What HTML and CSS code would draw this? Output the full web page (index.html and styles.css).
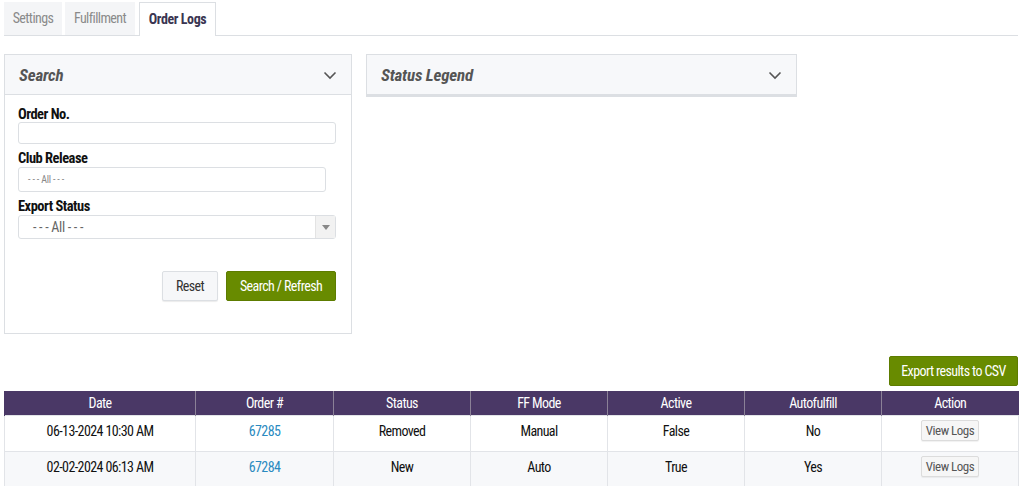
FILE: index.html
```html
<!DOCTYPE html>
<html>
<head>
<meta charset="utf-8">
<link rel="stylesheet" href="styles.css">
</head>
<body>
<div class="page">
  <div class="tabs">
    <div class="tab tab-settings">Settings</div>
    <div class="tab tab-ff">Fulfillment</div>
    <div class="tab tab-active">Order Logs</div>
  </div>

  <div class="panels">
    <div class="panel panel-search">
      <div class="panel-head">
        <span class="panel-title">Search</span>
        <svg class="chev" width="14" height="9" viewBox="0 0 14 9"><path d="M1.5 1.5 L7 7 L12.5 1.5" fill="none" stroke="#555" stroke-width="1.6"/></svg>
      </div>
      <div class="panel-body">
        <label class="lbl">Order No.</label>
        <div class="input input-order"></div>
        <label class="lbl">Club Release</label>
        <div class="input input-club"><span class="ph-small">- - - All - - -</span></div>
        <label class="lbl">Export Status</label>
        <div class="input input-export">
          <span class="ph">- - - All - - -</span>
          <span class="sel-arrow"><svg width="8" height="5" viewBox="0 0 8 5"><path d="M0 0 L8 0 L4 5 Z" fill="#888"/></svg></span>
        </div>
        <div class="btns">
          <button class="btn btn-reset">Reset</button>
          <button class="btn btn-green btn-search">Search / Refresh</button>
        </div>
      </div>
    </div>
    <div class="panel panel-legend">
      <div class="panel-head">
        <span class="panel-title">Status Legend</span>
        <svg class="chev" width="14" height="9" viewBox="0 0 14 9"><path d="M1.5 1.5 L7 7 L12.5 1.5" fill="none" stroke="#555" stroke-width="1.6"/></svg>
      </div>
    </div>
  </div>

  <div class="export-row">
    <button class="btn btn-green btn-export">Export results to CSV</button>
  </div>

  <table class="grid">
    <thead>
      <tr>
        <th class="c-date">Date</th>
        <th class="c-order">Order #</th>
        <th class="c-col">Status</th>
        <th class="c-col">FF Mode</th>
        <th class="c-col">Active</th>
        <th class="c-col">Autofulfill</th>
        <th class="c-col">Action</th>
      </tr>
    </thead>
    <tbody>
      <tr>
        <td>06-13-2024 10:30 AM</td>
        <td><a class="lnk">67285</a></td>
        <td>Removed</td>
        <td>Manual</td>
        <td>False</td>
        <td>No</td>
        <td><button class="btn-small">View Logs</button></td>
      </tr>
      <tr class="alt">
        <td>02-02-2024 06:13 AM</td>
        <td><a class="lnk">67284</a></td>
        <td>New</td>
        <td>Auto</td>
        <td>True</td>
        <td>Yes</td>
        <td><button class="btn-small">View Logs</button></td>
      </tr>
    </tbody>
  </table>
</div>
</body>
</html>
```
FILE: styles.css
```css
* { box-sizing: border-box; }
html, body { margin: 0; padding: 0; background: #fff; }
body {
  font-family: "Roboto Condensed", "Roboto", sans-serif;
  font-stretch: 75%;
  font-size: 14px;
  letter-spacing: -0.6px;
  color: #222;
}
.page { padding: 2px 6px 0 4px; width: 1024px; }

.tabs {
  display: flex;
  height: 34px;
  border-bottom: 1px solid #dcdfe3;
}
.tab {
  height: 33px;
  line-height: 33px;
  text-align: center;
  background: #f4f5f7;
  color: #8a8a8a;
  font-size: 14px;
}
.tab-settings { width: 58px; margin-right: 3px; }
.tab-ff { width: 70px; margin-right: 4px; }
.tab-active {
  width: 77px;
  height: 34px;
  background: #fff;
  color: #3a3551;
  font-weight: bold;
  letter-spacing: -0.4px;
  border: 1px solid #dcdfe3;
  border-bottom: none;
}

.panels {
  display: flex;
  align-items: flex-start;
  gap: 14px;
  margin-top: 18px;
}
.panel {
  border: 1px solid #dcdfe3;
  background: #fff;
}
.panel-search { width: 348px; height: 280px; }
.panel-legend { width: 431px; }
.panel-head {
  height: 40px;
  background: #f7f8fa;
  border-bottom: 1px solid #dcdfe3;
  display: flex;
  align-items: center;
  justify-content: space-between;
  padding: 0 14px 0 14px;
}
.panel-legend .panel-head { height: 41px; border-bottom: 2px solid #dcdfe3; }
.panel-title {
  font-style: italic;
  font-weight: bold;
  font-size: 17px;
  letter-spacing: -0.2px;
  color: #555;
}
.chev { margin-top: 2px; }

.panel-body { padding: 11px 16px 0 13px; }
.lbl {
  display: block;
  font-weight: bold;
  font-size: 14.5px;
  letter-spacing: -0.5px;
  color: #111;
  height: 16px;
  line-height: 18px;
}
.input {
  border: 1px solid #dcdfe3;
  border-radius: 3px;
  background: #fff;
  display: flex;
  align-items: center;
  position: relative;
}
.input-order { width: 318px; height: 22px; margin: 0 0 6px; }
.input-club { width: 308px; height: 25px; margin: 1px 0 6px; }
.input-export { width: 318px; height: 24px; margin: 1px 0 0; }
.ph-small { font-size: 10px; letter-spacing: -0.2px; color: #888; padding-left: 9px; }
.ph { font-size: 14px; letter-spacing: -0.3px; color: #666; padding-left: 14px; }
.sel-arrow {
  position: absolute;
  right: 0; top: 0; bottom: 0;
  width: 20px;
  background: #f2f2f2;
  border-left: 1px solid #e3e3e3;
  display: flex;
  align-items: center;
  justify-content: center;
}

.btns {
  display: flex;
  justify-content: flex-end;
  gap: 8px;
  margin-top: 32px;
  width: 318px;
}
.btn {
  font-family: inherit;
  font-stretch: 75%;
  font-size: 14px;
  letter-spacing: -0.6px;
  height: 30px;
  border-radius: 2px;
  padding: 0;
  cursor: pointer;
}
.btn-reset {
  width: 56px;
  background: #f6f7f9;
  color: #333;
  border: 1px solid #dcdfe3;
  box-shadow: 0 1px 1px rgba(0,0,0,0.08);
}
.btn-green {
  background: #688b00;
  color: #fff;
  border: 1px solid #5d7c00;
}
.btn-search { width: 110px; }

.export-row {
  display: flex;
  justify-content: flex-end;
  margin-top: 22px;
}
.btn-export { width: 129px; height: 30px; }

.grid {
  margin-top: 5px;
  width: 1014px;
  border-collapse: collapse;
  table-layout: fixed;
}
.grid th {
  background: #4a3866;
  color: #fff;
  font-weight: normal;
  font-size: 14px;
  height: 24px;
  padding: 0;
  border-left: 1px solid #8b8197;
}
.grid th:first-child { border-left: 1px solid #4a3866; }
.c-date { width: 191px; }
.c-order { width: 138px; }
.c-col { width: 137px; }
.grid td {
  text-align: center;
  height: 36px;
  padding: 0 0 5px;
  border: 1px solid #e2e4e8;
  font-size: 14px;
  color: #111;
}
.grid tr.alt td { background: #f7f8fa; }
.lnk { color: #2a8ac0; text-decoration: none; }
.btn-small {
  font-family: inherit;
  font-stretch: 75%;
  font-size: 13px;
  letter-spacing: -0.5px;
  color: #555;
  background: #f6f6f6;
  border: 1px solid #dcdcdc;
  border-radius: 2px;
  height: 21px;
  padding: 0 4px;
  box-shadow: 0 1px 1px rgba(0,0,0,0.06);
}
```
